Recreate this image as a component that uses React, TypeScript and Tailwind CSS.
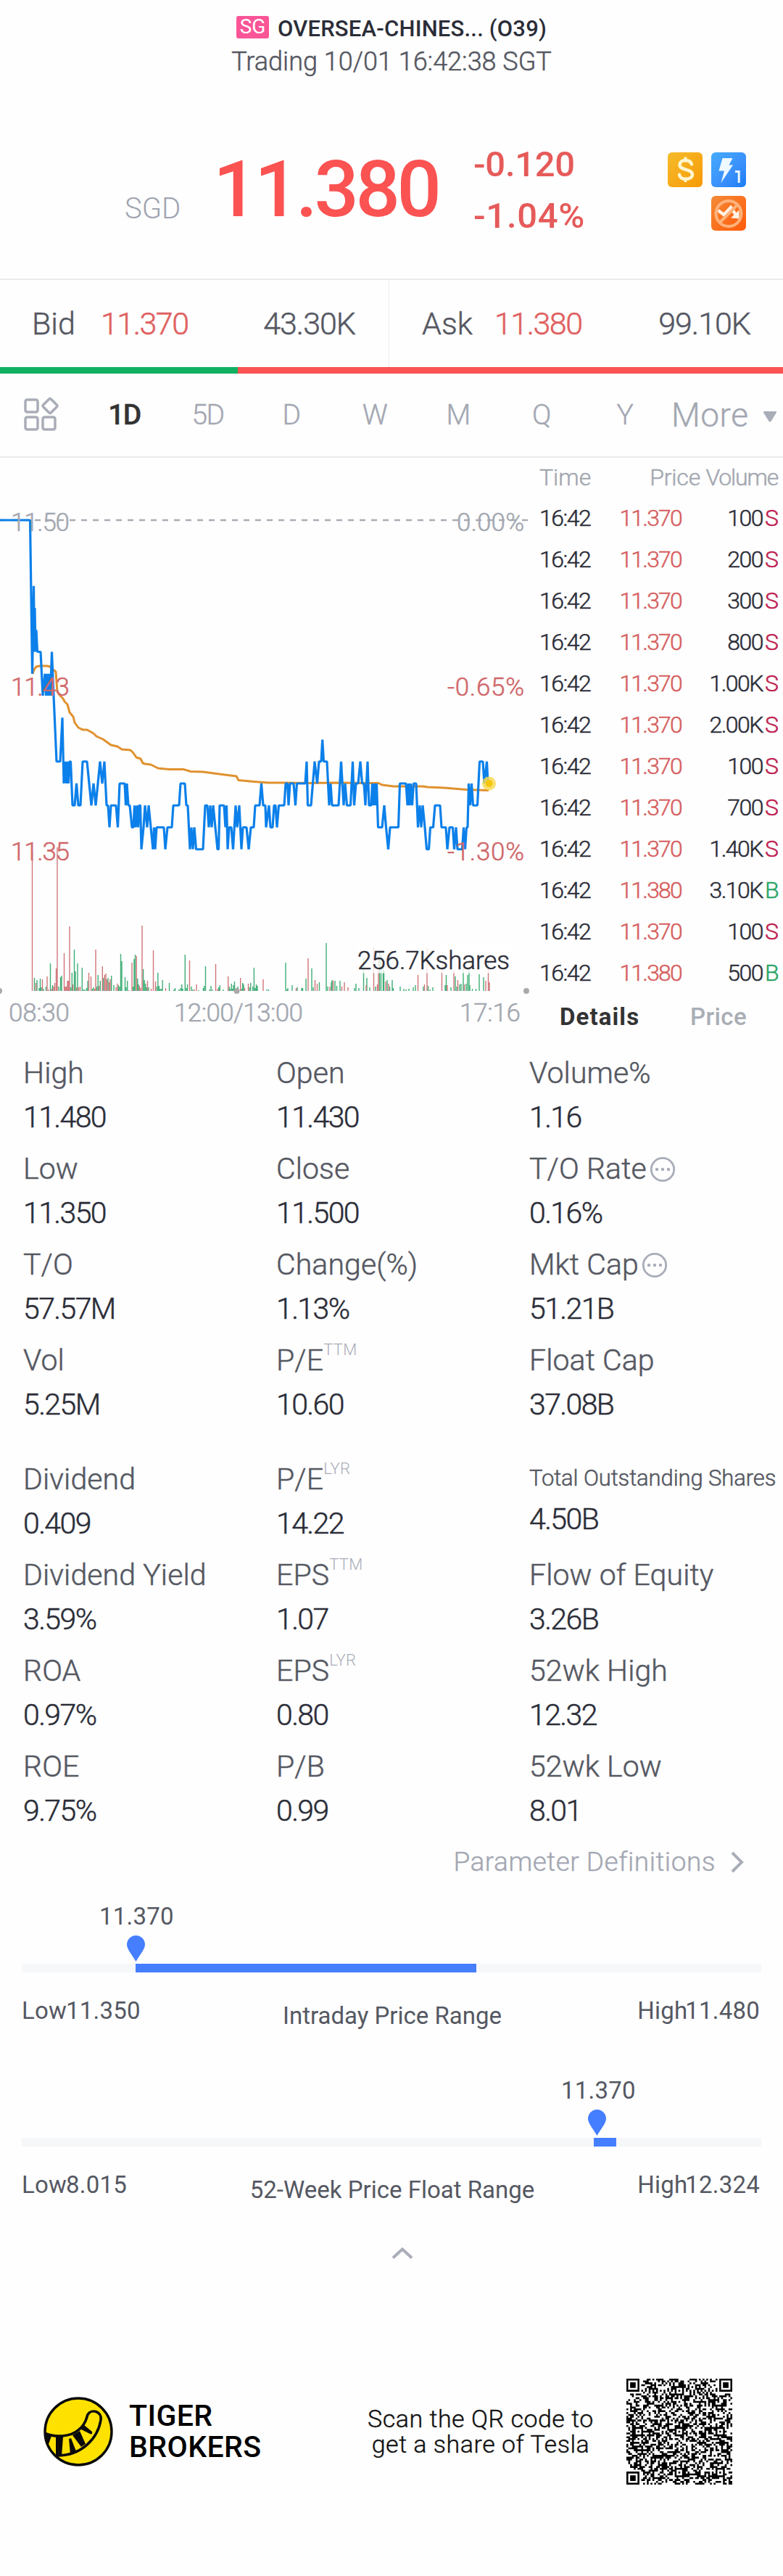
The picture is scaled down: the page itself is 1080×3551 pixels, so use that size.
import React from 'react';

interface Trade {
  price: string;
  volume: string;
  side: 'S' | 'B';
}

interface Stat {
  label: string;
  value: string;
  sup?: string;
  info?: boolean;
  small?: boolean;
}

const trades: Trade[] = [
  { price: '11.370', volume: '100', side: 'S' },
  { price: '11.370', volume: '200', side: 'S' },
  { price: '11.370', volume: '300', side: 'S' },
  { price: '11.370', volume: '800', side: 'S' },
  { price: '11.370', volume: '1.00K', side: 'S' },
  { price: '11.370', volume: '2.00K', side: 'S' },
  { price: '11.370', volume: '100', side: 'S' },
  { price: '11.370', volume: '700', side: 'S' },
  { price: '11.370', volume: '1.40K', side: 'S' },
  { price: '11.380', volume: '3.10K', side: 'B' },
  { price: '11.370', volume: '100', side: 'S' },
  { price: '11.380', volume: '500', side: 'B' },
];

const priceStats: Stat[] = [
  { label: 'High', value: '11.480' },
  { label: 'Open', value: '11.430' },
  { label: 'Volume%', value: '1.16' },
  { label: 'Low', value: '11.350' },
  { label: 'Close', value: '11.500' },
  { label: 'T/O Rate', value: '0.16%', info: true },
  { label: 'T/O', value: '57.57M' },
  { label: 'Change(%)', value: '1.13%' },
  { label: 'Mkt Cap', value: '51.21B', info: true },
  { label: 'Vol', value: '5.25M' },
  { label: 'P/E', sup: 'TTM', value: '10.60' },
  { label: 'Float Cap', value: '37.08B' },
];

const companyStats: Stat[] = [
  { label: 'Dividend', value: '0.409' },
  { label: 'P/E', sup: 'LYR', value: '14.22' },
  { label: 'Total Outstanding Shares', value: '4.50B', small: true },
  { label: 'Dividend Yield', value: '3.59%' },
  { label: 'EPS', sup: 'TTM', value: '1.07' },
  { label: 'Flow of Equity', value: '3.26B' },
  { label: 'ROA', value: '0.97%' },
  { label: 'EPS', sup: 'LYR', value: '0.80' },
  { label: '52wk High', value: '12.32' },
  { label: 'ROE', value: '9.75%' },
  { label: 'P/B', value: '0.99' },
  { label: '52wk Low', value: '8.01' },
];

// [x, ticks below the previous close], one tick is 0.01
const pricePoints: number[][] = [
  [0, 0], [41.5, 0], [44.5, 7], [46.5, 3], [47.5, 6], [48, 4], [49, 6], [50, 5], [51.5, 6], [56, 6], [59, 8], [62, 7],
  [63.5, 8], [65, 7], [66.5, 8], [68, 7], [69.5, 8], [71.5, 6], [74, 8], [78, 11], [83, 11], [86, 9], [88, 12],
  [90, 11], [91.5, 12], [93, 11], [94.5, 12], [96, 11], [97.5, 11], [100, 13], [103, 13], [105.5, 12], [108, 13],
  [111, 13], [114, 11], [120, 11], [123, 12], [126, 13], [129, 12], [132, 13], [135, 12], [138, 11], [141, 12],
  [144, 11], [147, 13], [149, 13], [151, 14], [153, 13], [160, 13], [162.5, 14], [165, 12], [172, 12], [173.5, 13],
  [175, 12], [177, 13], [179, 13], [182, 14], [184, 14], [185.5, 13], [187, 14], [189, 13], [190.5, 14], [192, 13],
  [193.5, 13], [195, 15], [198, 14], [200, 13], [203, 14], [205, 13], [208, 14], [211, 15], [212.5, 14], [214, 15],
  [216, 14], [226, 14], [228, 15], [231, 14], [237, 14], [239, 13], [247, 13], [249, 12], [255, 12], [257, 13],
  [259, 13], [262, 15], [264, 14], [266, 15], [268, 14], [270.5, 15], [280, 15], [283, 13], [286, 13], [288, 14],
  [290, 13], [292, 14], [294, 13], [297, 14], [300, 15], [301.5, 15], [303, 13], [309, 13], [311, 14], [312.5, 13],
  [314, 15], [316, 14], [319, 14], [321.5, 15], [325, 13], [327, 14], [330, 13], [333, 15], [335, 14], [340, 14],
  [343, 15], [346, 14], [350, 14], [352, 13], [358, 13], [360.5, 12], [363, 13], [366, 13], [367, 14], [371, 13],
  [373, 14], [376, 14], [378, 13], [380, 13], [382, 14], [384.5, 13], [392, 13], [394, 12], [396.5, 12], [398, 13],
  [400, 12], [405, 12], [407.5, 13], [409.5, 12], [421, 12], [423, 11], [424.5, 13], [429, 13], [431.5, 12],
  [434, 11], [437.5, 12], [440, 11], [443, 11], [444.7, 10], [446.5, 11], [451, 11], [454, 13], [456, 12], [458, 13],
  [467, 13], [470.5, 11], [474, 13], [476, 12], [478.5, 13], [483.5, 13], [486.5, 11], [488.5, 13], [491, 12],
  [494, 12], [497, 11], [499.5, 12], [502, 12], [504, 13], [507, 11], [509, 13], [512, 13], [513.5, 12], [515, 13],
  [516.5, 12], [518, 13], [519.5, 12], [521.5, 14], [527, 14], [530, 13], [532.5, 14], [535.5, 15], [538, 14],
  [549.5, 14], [551.5, 12], [560, 12], [562, 13], [563.5, 12], [565, 13], [566.5, 12], [568.5, 13], [570.5, 12],
  [574, 12], [576.5, 14], [579, 13], [581, 14], [583, 13], [586, 14], [588.5, 15], [591.5, 15], [593.5, 14],
  [597.5, 14], [600, 13], [607, 13], [609, 14], [615, 14], [617, 15], [620, 14], [624.5, 14], [626.5, 15], [629, 14],
  [631, 15], [637.5, 15], [639.5, 14], [641.5, 15], [643.5, 14], [645, 14], [646.5, 12], [648.5, 13], [650.5, 12],
  [652.5, 13], [658.5, 13], [661.5, 11], [666, 11], [668, 12], [671.5, 11], [673, 12], [674, 12],
];

const averagePoints =
  '45,929 47,923 50,919 55,918 65,918 69,919 72,922 77,926 78,940 79,953 82,958 87,963 89,967 93,971 96,982 101,988 103,996 108,1003 112,1005 115,1006 120,1006 129,1011 133,1015 142,1019 153,1027 162,1029 168,1033 180,1034 184,1038 188,1044 194,1046 197,1052 200,1053 208,1054 218,1059 233,1060.5 253,1060.5 263,1063.5 280,1064 295,1066 310,1068 326,1070 329,1075.5 350,1077.5 370,1079 393,1079 427,1079.5 460,1079 522,1079.5 527,1082 543,1084 583,1084 590,1085 613,1086 643,1088.5 674,1089.5';

// [x, height]
const sellBars: number[][] = [
  [44.5, 192], [49.5, 11], [58.5, 16], [65, 20], [67, 2], [71, 3], [74, 6], [75.5, 11], [77.5, 31], [79, 198],
  [88.5, 52], [90, 6], [91.5, 6], [93, 14], [94.5, 14], [96, 89], [100.5, 9], [105.5, 5], [108.5, 5], [110.5, 6],
  [122.5, 25], [125.5, 20], [130.5, 3], [132, 57], [136.7, 7], [141.3, 34], [144.3, 22], [146, 24], [147.5, 16],
  [150.5, 12], [152, 16], [160, 5], [162, 10], [178, 1], [182, 39], [188.3, 48], [192.5, 7], [194, 4], [196, 90],
  [203.5, 14], [208.5, 3], [211.5, 56], [214.5, 13], [228.5, 4], [261.5, 42], [268, 2], [271, 9], [297.5, 37],
  [300, 3], [314.7, 20], [326.5, 4], [331.7, 18], [337.5, 4], [342.5, 10], [363, 16], [408.5, 4], [425, 45],
  [434.5, 15], [437.5, 10], [455, 6], [459.5, 14], [471.5, 6], [475, 12], [480, 5], [505, 8], [515.5, 60],
  [520.5, 9], [522, 48], [532, 13], [536, 10], [576.5, 22], [585.5, 9], [589, 60], [609.5, 35], [617, 8], [626, 28],
  [631.5, 15], [640.5, 9], [670, 14], [673.5, 40], [675, 12],
];

const buyBars: number[][] = [
  [47.5, 18], [51, 15], [54, 4], [55.5, 17], [57, 5], [60, 3], [63.5, 6], [69.5, 38], [72.5, 8], [81, 6], [83.5, 19],
  [85, 21], [97.5, 5], [99.3, 25], [102.5, 57], [104, 27], [107, 38], [113.3, 32], [115, 2], [117, 2], [119.5, 4],
  [121, 14], [127.3, 3], [129, 5], [133.5, 6], [135.2, 22], [138.3, 14], [142.8, 18], [149, 18], [153.7, 21],
  [157, 8], [163.3, 8], [164.8, 6], [166.5, 51], [168, 41], [172.5, 19], [174, 5], [175.7, 14], [183.5, 6],
  [185, 44], [186.5, 50], [189.8, 17], [191, 9], [197.6, 30], [199.2, 15], [200.8, 10], [202, 5], [205, 5], [216, 6],
  [217.8, 25], [219.3, 7], [220.8, 3], [222.5, 3], [224.2, 15], [233.5, 11], [240, 2], [241.5, 4], [247, 2],
  [249, 4], [250.7, 9], [252, 3], [255.3, 50], [257, 4], [258.5, 9], [264, 6], [266, 2], [274, 1], [280.5, 4],
  [281.7, 7], [283.5, 34], [289, 2], [291, 7], [293, 2], [301.7, 5], [303.3, 8], [308, 2], [316.2, 6], [317.5, 3],
  [319.3, 10], [320.8, 3], [322, 8], [323.5, 13], [325, 3], [328, 6], [333, 3], [334.7, 11], [336, 9], [344, 5],
  [345.7, 11], [348.7, 6], [350.4, 32], [352, 4], [353.5, 9], [355, 7], [368, 2], [370.5, 2], [394, 39], [395.7, 2],
  [397, 4], [403, 8], [410, 5], [416, 4], [417.5, 4], [422, 17], [430, 31], [432, 5], [440.5, 12], [450, 66],
  [452, 6], [457, 12], [458, 15], [462, 14], [464.5, 7], [469, 14], [489, 4], [491, 10], [495, 4], [501.5, 45],
  [506, 18], [510, 5], [518, 6], [523.5, 55], [525.5, 50], [528.5, 36], [529.5, 28], [534, 15], [537.5, 6],
  [541, 15], [542.5, 4], [552, 6], [557, 3], [560, 2], [564, 3], [570, 5], [573, 8], [584, 6], [590.5, 7], [593, 2],
  [597, 5], [614, 8], [615.5, 22], [622, 5], [628, 20], [630, 6], [634, 9], [636, 10], [639, 32], [643, 10],
  [645, 22], [647, 30], [648, 8], [651.5, 3], [656.5, 3], [661, 23], [667, 19],
];

const chartLabels = [
  { text: '11.50', x: 15, y: 732, width: 81, fill: '#a3a7b0' },
  { text: '11.43', x: 15, y: 959, width: 81, fill: '#d0676a' },
  { text: '11.35', x: 15, y: 1186, width: 81, fill: '#d0676a' },
  { text: '0.00%', x: 630, y: 732, width: 93, fill: '#a3a7b0' },
  { text: '-0.65%', x: 617, y: 959, width: 106, fill: '#d0676a' },
  { text: '-1.30%', x: 617, y: 1186, width: 106, fill: '#d0676a' },
  { text: '256.7Kshares', x: 493, y: 1336, width: 210, fill: '#2b2d38' },
  { text: '08:30', x: 12, y: 1408, width: 84, fill: '#a3a7b0' },
  { text: '12:00/13:00', x: 240, y: 1408, width: 178, fill: '#a3a7b0' },
  { text: '17:16', x: 634, y: 1408, width: 84, fill: '#a3a7b0' },
];

const barsPath = (bars: number[][]) => bars.map(([x, h]) => `M${x} 1366V${1366 - h}`).join('');

const PriceChart: React.FC = () => {
  const line = pricePoints.map(([x, t]) => `${x},${717 + t * 30.25}`).join(' ');

  return (
    <svg className="block shrink-0 font-light" width="730" height="804" viewBox="0 631 730 804">
      <line x1="0" y1="717" x2="728" y2="717" stroke="#a9adb5" strokeWidth="2.5" strokeDasharray="8 8" />
      <path d={barsPath(buyBars)} stroke="#3fae76" strokeWidth="1.4" />
      <path d={barsPath(sellBars)} stroke="#d0767a" strokeWidth="1.4" />
      <polyline points={averagePoints} fill="none" stroke="#e0912f" strokeWidth="3" strokeLinejoin="round" />
      <polyline points={line} fill="none" stroke="#0c80ea" strokeWidth="3.2" strokeLinejoin="bevel" />
      <circle cx="674.5" cy="1080" r="9.5" fill="#f8d84c" fillOpacity="0.8" />
      <circle cx="674.5" cy="1080" r="5" fill="#f6c60a" />
      <rect x="493" y="1303" width="210" height="38.5" fill="#fff" fillOpacity="0.8" />
      <circle cx="-1" cy="1366" r="4" fill="#a9a9a9" />
      <circle cx="326.5" cy="1366" r="4" fill="#a9a9a9" />
      <circle cx="726" cy="1366" r="4" fill="#a9a9a9" />
      {chartLabels.map((l) => (
        <text
          key={l.text}
          x={l.x}
          y={l.y}
          fill={l.fill}
          stroke={l.fill}
          strokeWidth="0.5"
          fontSize="35"
          textLength={l.width}
        >
          {l.text}
        </text>
      ))}
    </svg>
  );
};

const TradeList: React.FC = () => (
  <div className="flex w-[350px] flex-col text-[32px] font-light text-[#2b2d38] [-webkit-text-stroke:0.5px]">
    <div className="flex h-[54px] items-center text-[#a3a7b0]">
      <span className="w-[120px] pl-[14px]">Time</span>
      <span className="w-[116px] text-right tracking-[-0.2px]">Price</span>
      <span className="w-[107px] text-right tracking-[-1.2px]">Volume</span>
    </div>
    {trades.map((t, i) => (
      <div key={i} className="flex h-[57px] items-center tracking-[-1.5px]">
        <span className="w-[110px] pl-[14px]">16:42</span>
        <span className="w-[100px] text-right tracking-[-1.8px] text-[#d65f60]">{t.price}</span>
        <span className="w-[112px] text-right">{t.volume}</span>
        <span className={t.side === 'S' ? 'pl-[3px] text-[#bf2051]' : 'pl-[3px] text-[#27a566]'}>{t.side}</span>
      </div>
    ))}
    <div className="flex h-[66px] items-center text-[33px] [-webkit-text-stroke:0px]">
      <span className="w-[222px] pl-[42px] font-bold tracking-[1.1px] text-[#333333]">Details</span>
      <span className="font-medium tracking-[0.4px] text-[#a9adb5]">Price</span>
    </div>
  </div>
);

const InfoIcon: React.FC = () => (
  <svg className="ml-[4px]" width="36" height="36" viewBox="0 0 36 36">
    <circle cx="18" cy="18" r="15.7" fill="none" stroke="#a9adb8" strokeWidth="2.8" />
    <circle cx="10" cy="18" r="2.2" fill="#a9adb8" />
    <circle cx="18" cy="18" r="2.2" fill="#a9adb8" />
    <circle cx="26" cy="18" r="2.2" fill="#a9adb8" />
  </svg>
);

const StatsGrid: React.FC<{ stats: Stat[] }> = ({ stats }) => (
  <div className="grid grid-cols-[349px_349px_1fr] pl-8 font-light [-webkit-text-stroke:0.5px]">
    {stats.map((s) => (
      <div key={s.label + (s.sup ?? '')} className="h-[132px] whitespace-nowrap">
        <div
          className={
            s.small
              ? 'flex h-[54px] items-center pt-[3px] text-[31px] tracking-[-0.1px] text-[#555862]'
              : 'flex h-[60px] items-center text-[41px] tracking-[0.1px] text-[#555862]'
          }
        >
          {s.label}
          {s.sup && (
            <span className="mb-[31px] text-[22px] tracking-[0.3px] text-[#a9adb8] [-webkit-text-stroke:0px]">{s.sup}</span>
          )}
          {s.info && <InfoIcon />}
        </div>
        <div className="h-[61px] text-[41px] leading-[61px] tracking-[-1.6px] text-[#2b2d38]">{s.value}</div>
      </div>
    ))}
  </div>
);

interface RangeBarProps {
  title: string;
  low: string;
  high: string;
  price: string;
  pin: number;
  labelLeft: number;
  from: number;
  to: number;
}

const RangeBar: React.FC<RangeBarProps> = ({ title, low, high, price, pin, labelLeft, from, to }) => (
  <div className="h-[240px] px-[30px] text-[33px] text-[#555862]">
    <div className="h-[44px] leading-[46px] tracking-[0.2px]" style={{ marginLeft: labelLeft }}>
      {price}
    </div>
    <svg className="mt-[5px] block" width="25" height="36" viewBox="0 0 25 36" style={{ marginLeft: pin }}>
      <path d="M12.5 0C19.5 0 25 5.6 25 12.6C25 19 18 26.5 12.5 36C7 26.5 0 19 0 12.6C0 5.6 5.5 0 12.5 0Z" fill="#457eff" />
    </svg>
    <div className="mt-[3px] h-[12px] bg-[#f6f7f9]">
      <div className="h-full bg-[#457eff]" style={{ marginLeft: from, width: to - from }} />
    </div>
    <div className="grid grid-cols-[200px_1fr_200px] pt-8 leading-[41px] tracking-[0.2px] whitespace-nowrap">
      <span>
        Low<span className="-ml-px">{low}</span>
      </span>
      <span className="mt-[7px] pl-[2px] text-center tracking-normal">{title}</span>
      <span className="pr-[2px] text-right">
        High<span className="-ml-[3px]">{high}</span>
      </span>
    </div>
  </div>
);

const QR_SIZE = 57;

const qrPath = () => {
  const cells: boolean[][] = [];
  let seed = 20231;
  for (let y = 0; y < QR_SIZE; y++) {
    cells.push([]);
    for (let x = 0; x < QR_SIZE; x++) {
      seed = (seed * 1103515245 + 12345) % 2147483648;
      cells[y].push((seed >> 12) % 100 < 50);
    }
  }
  const ring = (cx: number, cy: number, r: number, dark: (d: number) => boolean) => {
    for (let y = cy - r; y <= cy + r; y++) {
      for (let x = cx - r; x <= cx + r; x++) {
        if (y < 0 || x < 0 || y >= QR_SIZE || x >= QR_SIZE) continue;
        cells[y][x] = dark(Math.max(Math.abs(x - cx), Math.abs(y - cy)));
      }
    }
  };
  for (let i = 0; i < QR_SIZE; i++) {
    cells[6][i] = i % 2 === 0;
    cells[i][6] = i % 2 === 0;
  }
  [[28, 6], [6, 28], [28, 28], [50, 28], [28, 50], [50, 50]].forEach(([x, y]) => ring(x, y, 2, (d) => d !== 1));
  [[3, 3], [53, 3], [3, 53]].forEach(([x, y]) => ring(x, y, 4, (d) => d < 2 || d === 3));
  let path = '';
  cells.forEach((row, y) => row.forEach((on, x) => (path += on ? `M${x} ${y}h1v1h-1z` : '')));
  return path;
};

const Header: React.FC = () => (
  <header className="flex h-[386px] flex-col border-b-2 border-[#e9eaec] pt-[20px]">
    <div className="flex h-[40px] items-center justify-center gap-[12px]">
      <span className="-mt-[6px] flex h-[31px] w-[45px] items-center justify-center rounded-[3px] bg-[#fa5596] text-[28px] text-white">
        SG
      </span>
      <span className="text-[31px] font-medium tracking-[0.2px] text-[#2b2d38]">OVERSEA-CHINES... (O39)</span>
    </div>
    <div className="mt-[2px] h-[44px] text-center text-[36px] leading-[46px] font-light text-[#555862] [-webkit-text-stroke:0.5px]">
      Trading 10/01 16:42:38 SGT
    </div>
    <div className="flex">
      <span className="mt-[157px] ml-[172px] w-[122px] text-[40px] leading-[50px] font-light text-[#a0a4b0]">SGD</span>
      <span className="mt-[95px] w-[359px] text-[108px] leading-[121px] font-medium tracking-[-4.4px] text-[#fb5252]">
        11.380
      </span>
      <div className="mt-[85px] w-[268px] text-[49px] leading-[71px] font-medium text-[#e65a5a]">
        <div className="tracking-[-0.3px]">-0.120</div>
        <div className="tracking-[0.7px]">-1.04%</div>
      </div>
      <div className="mt-[104px] grid grid-cols-[48px_48px] content-start gap-[12px]">
        <svg width="48" height="48" viewBox="0 0 48 48">
          <defs>
            <linearGradient id="gold" x1="0" y1="0" x2="1" y2="1">
              <stop offset="0" stopColor="#f5bb2c" />
              <stop offset="1" stopColor="#f79a06" />
            </linearGradient>
          </defs>
          <rect width="48" height="48" rx="6" fill="url(#gold)" />
          <path
            d="M24.5 8.500v3M24.500 36.500v2.500M33 16.500c-1-3.500-4.500-5.500-8.500-5.500c-5 0-8 2.500-8 6.300c0 8 17.500 5 17.500 13.200c0 4-4 6.300-9.300 6.300c-5 0-8.200-2.300-8.700-6"
            fill="none"
            stroke="#fff6cf"
            strokeWidth="4.400"
            strokeLinecap="round"
          />
        </svg>
        <svg width="48" height="48" viewBox="0 0 48 48">
          <defs>
            <linearGradient id="blue" x1="0" y1="0" x2="1" y2="1">
              <stop offset="0" stopColor="#45abfb" />
              <stop offset="0.6" stopColor="#3a90fb" />
              <stop offset="1" stopColor="#1a7cf5" />
            </linearGradient>
          </defs>
          <rect width="48" height="48" rx="6" fill="url(#blue)" />
          <path d="M15.500 8H29.500L24.500 17.500H30L13.500 42L18 25.500H10.500Z" fill="#eef8ff" />
          <path d="M33 26.500H38.200V42" fill="none" stroke="#eef8ff" strokeWidth="3" />
        </svg>
        <svg className="col-start-2" width="48" height="48" viewBox="0 0 48 48">
          <defs>
            <linearGradient id="orange" x1="0" y1="0" x2="1" y2="1">
              <stop offset="0" stopColor="#f48a36" />
              <stop offset="1" stopColor="#ff5a0a" />
            </linearGradient>
          </defs>
          <rect width="48" height="48" rx="6" fill="url(#orange)" />
          <path d="M9.500 20L17.500 26L27 16L36 29" fill="none" stroke="#fff3e6" strokeWidth="4.500" />
          <path d="M27 30.500L38.500 19.500V31.500Z" fill="#fff3e6" />
          <circle cx="24" cy="24.500" r="17.500" fill="none" stroke="#ffb27a" strokeWidth="4" />
          <path d="M12 36.500L36 12.500" stroke="#ffb27a" strokeWidth="4" />
        </svg>
      </div>
    </div>
  </header>
);

const BidAsk: React.FC = () => (
  <>
    <div className="flex h-[120px] items-center text-[43px] font-light text-[#555862] [-webkit-text-stroke:0.5px]">
      <div className="flex h-full w-[537px] items-center border-r border-[#e9eaec] pl-[44px]">
        <span className="w-[95px]">Bid</span>
        <span className="tracking-[-1.5px] text-[#e0605f]">11.370</span>
        <span className="ml-auto pr-[46px] tracking-[-1px]">43.30K</span>
      </div>
      <div className="flex flex-1 items-center pl-[45px]">
        <span className="w-[100px]">Ask</span>
        <span className="tracking-[-1.5px] text-[#e0605f]">11.380</span>
        <span className="ml-auto pr-[45px] tracking-[-1px]">99.10K</span>
      </div>
    </div>
    <div className="flex h-[9px]">
      <div className="w-[328px] bg-[#11b062]" />
      <div className="flex-1 bg-[#fb5252]" />
    </div>
  </>
);

const PeriodTabs: React.FC = () => (
  <nav className="flex h-[116px] items-center border-b-2 border-[#e9eaec] text-[39px] font-light text-[#a3a7b2] [-webkit-text-stroke:0.4px]">
    <svg className="ml-8 shrink-0" width="50" height="50" viewBox="0 0 50 50" fill="none" stroke="#a9adb8" strokeWidth="3.500">
      <rect x="3" y="4" width="17" height="17" rx="2.500" />
      <rect x="3" y="28" width="17" height="17" rx="2.500" />
      <rect x="27" y="28" width="17" height="17" rx="2.500" />
      <rect x="29.500" y="5" width="15" height="15" rx="2" transform="rotate(45 37 12.500)" />
    </svg>
    <div className="ml-[32px] flex">
      {['1D', '5D', 'D', 'W', 'M', 'Q', 'Y'].map((p) => (
        <span
          key={p}
          className={
            p === '1D' ? 'w-[115px] text-center font-medium tracking-[-1.5px] text-[#333333]' : 'w-[115px] text-center tracking-[-1.5px]'
          }
        >
          {p}
        </span>
      ))}
    </div>
    <span className="ml-[7px] text-[46px] tracking-[0.5px]">More</span>
    <svg className="mt-[4px] mr-[8px] ml-auto" width="20" height="15" viewBox="0 0 20 15">
      <path d="M2.500 0H17.500Q20 0 18.500 2.500L12 13Q10 16 8 13L1.500 2.500Q0 0 2.500 0Z" fill="#a9adb8" />
    </svg>
  </nav>
);

const Footer: React.FC = () => (
  <footer className="mt-[165px] flex h-[146px] items-center pl-[59px] text-black">
    <svg width="98" height="98" viewBox="0 0 98 98">
      <circle cx="49" cy="49" r="46" fill="#ffe100" stroke="#0a0a0a" strokeWidth="3.400" />
      <path
        d="M3.500 51.500C16 57 38 57 50 46C60 38 60 30 62 25.500C67 17 82 21 80 33C76 58 54 82 20 82"
        fill="none"
        stroke="#0a0a0a"
        strokeWidth="3.600"
      />
      <path d="M3 50L12 55L7 69C3 62 2 56 3 50Z" fill="#0a0a0a" />
      <path d="M18 56H28L26 83H18Z" fill="#0a0a0a" />
      <path d="M36 59L39 58L46 76L38 80Z" fill="#0a0a0a" />
      <path d="M41 54L51 48L59 66L53 70Z" fill="#0a0a0a" />
      <path d="M51 45L57 40L68 49C69 52 67 53 65 52Z" fill="#0a0a0a" />
    </svg>
    <div className="ml-[21px] w-[326px] text-[41px] leading-[43px] font-medium tracking-[0.4px]">
      <div>TIGER</div>
      <div>BROKERS</div>
    </div>
    <div className="w-[318px] text-center text-[34px] leading-[35px] font-light tracking-[0.5px] whitespace-nowrap text-[#111111] [-webkit-text-stroke:0.4px]">
      <div>Scan the QR code to</div>
      <div>get a share of Tesla</div>
    </div>
    <svg className="ml-[42px]" width="146" height="146" viewBox="0 0 57 57">
      <path d={qrPath()} fill="#000" />
    </svg>
  </footer>
);

const App: React.FC = () => {
  return (
    <div className="flex h-[3551px] w-[1080px] flex-col overflow-hidden bg-[#fefefe] font-[Roboto,'Liberation_Sans',sans-serif]">
      <Header />
      <BidAsk />
      <PeriodTabs />
      <div className="flex h-[804px]">
        <PriceChart />
        <TradeList />
      </div>
      <div className="mt-[15px] flex flex-col gap-[32px]">
        <StatsGrid stats={priceStats} />
        <StatsGrid stats={companyStats} />
      </div>
      <div className="flex h-[59px] items-center justify-end pr-[53px] pb-[2px] text-[37px] font-light text-[#a3a7b2] [-webkit-text-stroke:0.4px]">
        <span className="tracking-[0.5px]">Parameter Definitions</span>
        <svg className="ml-[20px]" width="20" height="30" viewBox="0 0 20 30">
          <path d="M3 2L16 15L3 28" fill="none" stroke="#a9adb8" strokeWidth="4" />
        </svg>
      </div>
      <div className="mt-[22px]">
        <RangeBar
          title="Intraday Price Range"
          low="11.350"
          high="11.480"
          price="11.370"
          pin={144.5}
          labelLeft={107}
          from={157}
          to={627}
        />
        <RangeBar
          title="52-Week Price Float Range"
          low="8.015"
          high="12.324"
          price="11.370"
          pin={781}
          labelLeft={744}
          from={789}
          to={820}
        />
      </div>
      <svg className="-mt-px ml-[540px] block shrink-0" width="30" height="16" viewBox="0 0 30 16">
        <path d="M2 14.500L15 2.500L28 14.500" fill="none" stroke="#a9adb8" strokeWidth="4" />
      </svg>
      <Footer />
    </div>
  );
};

export default App;
